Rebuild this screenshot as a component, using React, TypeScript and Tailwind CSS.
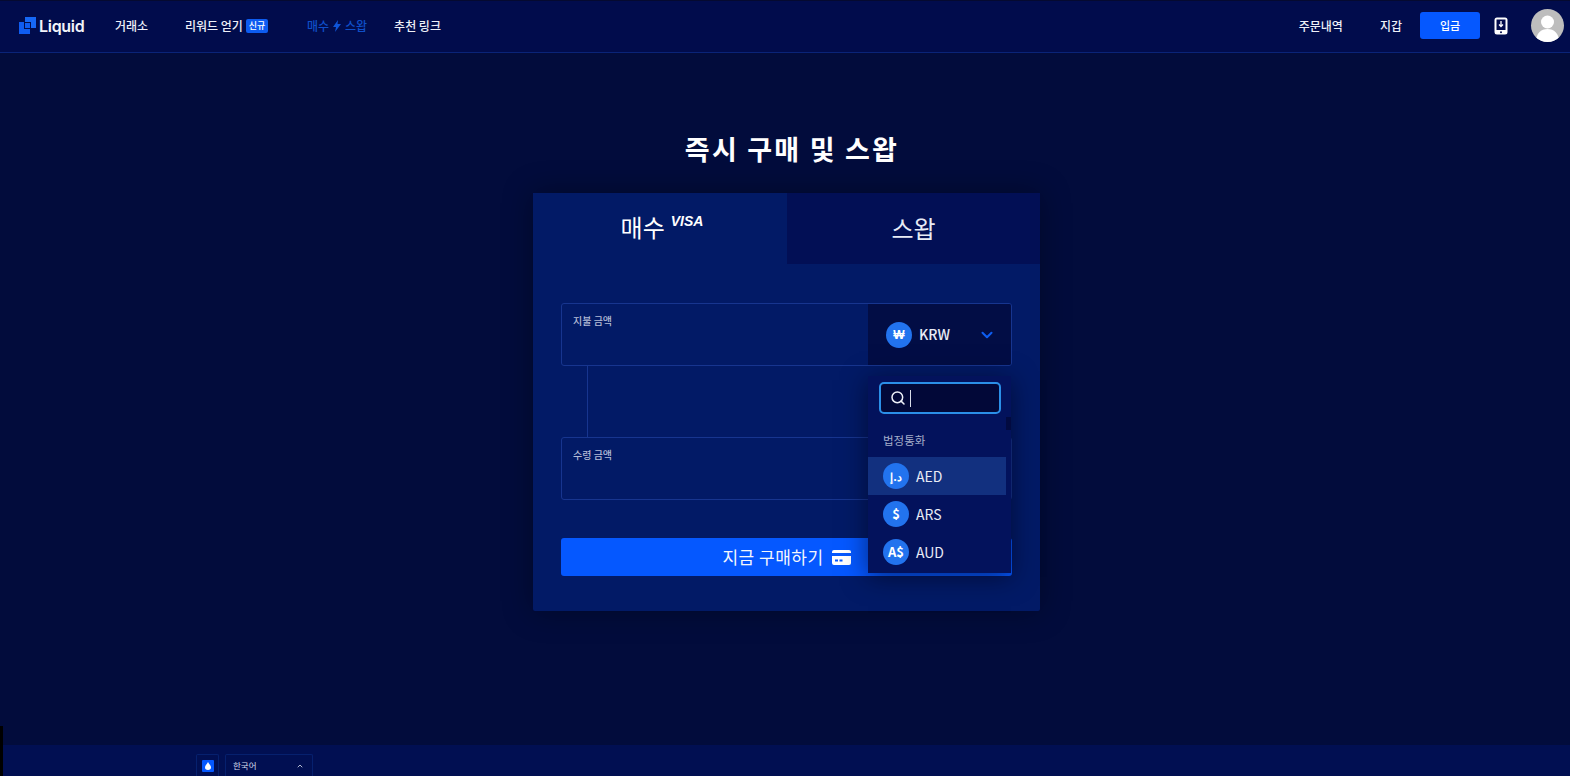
import React from "react";
import { ChevronDown, ChevronUp, Search } from "lucide-react";

const font = { fontFamily: '"Noto Sans CJK KR", "Noto Sans", sans-serif' };

function Coin({ children, small }: { children: React.ReactNode; small?: boolean }) {
  return (
    <div className={`w-[26px] h-[26px] rounded-full bg-[#2273ee] flex items-center justify-center text-white font-bold shrink-0 ${small ? "text-[11px]" : "text-[13px]"}`}>
      {children}
    </div>
  );
}

function Row({ code, sym, active, small }: { code: string; sym: string; active?: boolean; small?: boolean }) {
  return (
    <div className={`h-[38px] w-[138px] pl-[15px] flex items-center gap-[7px] ${active ? "bg-[#12307f]" : ""}`}>
      <Coin small={small}>{sym}</Coin>
      <span className="text-[14px] text-[#e8ebf5]">{code}</span>
    </div>
  );
}

function Field({ label, children }: { label: string; children?: React.ReactNode }) {
  return (
    <div className="h-[63px] border border-[#17358f] rounded-[3px] flex justify-between overflow-hidden">
      <div className="pl-[11px] pt-[10px] text-[10px] leading-[14px] font-medium text-[#b4bcd6]">{label}</div>
      {children}
    </div>
  );
}

export default function App() {
  return (
    <div style={font} className="w-[1570px] h-[776px] bg-[#020c3c] flex flex-col overflow-hidden text-white relative">
      <header className="h-[53px] shrink-0 bg-[#010c4c] border-b border-[#0a2478] border-t border-t-[#050a30] flex items-center pl-[19px] pr-[6px] pb-[2px]">
        <svg width="17" height="17" viewBox="0 0 17 17" className="mr-[3px]">
          <path d="M6 0H17V11H12V5H6z" fill="#1668f5" />
          <path d="M0 5H5V12H11V17H0z" fill="#0f5cf0" />
          <path d="M6 6H11V11H6z" fill="#0f5cf0" />
        </svg>
        <span className="text-[16px] font-semibold tracking-[-0.3px] w-[76px] text-[#f2f4fa]" style={{ fontFamily: '"Inter", sans-serif' }}>Liquid</span>
        <span className="text-[12px] font-medium w-[70px] text-[#eef0f8]">거래소</span>
        <span className="text-[12px] font-medium text-[#eef0f8] mr-[3px]">리워드 얻기</span>
        <span className="h-[14px] w-[22px] rounded-[2px] bg-[#0d5cf0] text-[9px] font-medium flex items-center justify-center mr-[39px]">신규</span>
        <span className="text-[12px] font-medium text-[#0f4fc8] flex items-center gap-[4px] mr-[27px]">
          매수
          <svg width="8" height="12" viewBox="0 0 8 12"><path d="M5 0 0 7h3l-1 5 6-8H4.500z" fill="#0f55d8" /></svg>
          스왑
        </span>
        <span className="text-[12px] font-medium text-[#eef0f8]">추천 링크</span>
        <div className="flex-1" />
        <span className="text-[12px] font-medium text-[#eef0f8] mr-[37px]">주문내역</span>
        <span className="text-[12px] font-medium text-[#eef0f8] mr-[18px]">지갑</span>
        <button className="w-[60px] h-[27px] rounded-[3px] bg-[#0558ff] text-[11px] font-medium flex items-center justify-center mr-[14px]">입금</button>
        <svg width="14" height="18" viewBox="0 0 14 18" className="mr-[23px]">
          <rect x="0.500" y="0.500" width="13" height="17" rx="2.500" fill="#fff" />
          <rect x="2.500" y="2.500" width="9" height="10.500" fill="#020b4c" />
          <path d="M7 4v5M5 7.500 7 9.500l2-2" stroke="#fff" strokeWidth="1.300" fill="none" />
          <circle cx="7" cy="15.200" r="1" fill="#020b4c" />
        </svg>
        <div className="w-[33px] h-[33px] rounded-full bg-[#bdbdbd] overflow-hidden">
          <svg width="33" height="33" viewBox="0 0 33 33">
            <circle cx="16.500" cy="13" r="6.500" fill="#fff" />
            <path d="M5 33c0-9 5-13 11.500-13S28 24 28 33z" fill="#fff" />
          </svg>
        </div>
      </header>

      <main className="flex-1 flex flex-col items-center pl-[3px]">
        <h1 className="mt-[76px] h-[40px] leading-[40px] text-[27px] font-bold tracking-[2.200px] pl-[11px] text-center text-white">즉시 구매 및 스왑</h1>
        <div className="mt-[24px] w-[507px] h-[418px] bg-[#021a66] rounded-[2px] shadow-[0_0_30px_rgba(0,0,0,0.35)] relative">
          <div className="flex h-[71px]">
            <div className="w-[254px] flex items-center justify-center gap-[6px] bg-[#021a66] pb-[3px] pl-[4px]">
              <span className="text-[24px]">매수</span>
              <span className="italic font-bold text-[14px] -mt-[11px]" style={{ fontFamily: '"Liberation Sans", sans-serif' }}>VISA</span>
            </div>
            <div className="flex-1 flex items-center justify-center bg-[#020f55] text-[24px] text-[#e8ebf5] pb-[1px]">스왑</div>
          </div>
          <div className="px-[28px] pt-[39px]">
            <Field label="지불 금액">
              <div className="w-[143px] bg-[#020d45] flex items-center pl-[18px] pr-[15px]">
                <Coin><span className="font-['Liberation_Sans'] text-[12px]">₩</span></Coin>
                <span className="ml-[7px] text-[14px] font-medium text-[#e8ebf5]">KRW</span>
                <div className="flex-1" />
                <ChevronDown size={18} strokeWidth={2.750} className="text-[#0d5cf0]" />
              </div>
            </Field>
            <div className="h-[71px] ml-[26px] border-l border-[#17358f]" />
            <Field label="수령 금액" />
            <button className="mt-[38px] w-full h-[38px] rounded-[3px] bg-[#0558ff] flex items-center justify-center gap-[8px] text-[17px] tracking-[0.5px] text-[#f4f6fc]">
              지금 구매하기
              <svg width="19" height="15" viewBox="0 0 19 15">
                <path d="M0 2a2 2 0 0 1 2-2h15a2 2 0 0 1 2 2v1H0zM0 6h19v7a2 2 0 0 1-2 2H2a2 2 0 0 1-2-2z" fill="#fff" />
                <rect x="3" y="9.500" width="3" height="2" fill="#0558ff" />
                <rect x="7.500" y="9.500" width="3" height="2" fill="#0558ff" />
              </svg>
            </button>
          </div>

          <div className="absolute left-[335px] top-[183px] w-[143px] h-[197px] bg-[#03125c] shadow-[0_4px_24px_rgba(0,0,20,0.55)]">
            <div className="mx-[11px] mt-[6px] h-[32px] w-[122px] rounded-[5px] border-2 border-[#2b8fe8] bg-[#020838] flex items-center pl-[9px]">
              <Search size={16} strokeWidth={2.250} className="text-[#eef0f8]" />
              <span className="ml-[4px] w-px h-[17px] bg-[#d8dce8]" />
            </div>
            <div className="absolute right-0 top-[41px] w-[5px] h-[13px] bg-[#020a40]" />
            <div className="ml-[15px] mt-[16px] h-[20px] text-[11.500px] leading-[20px] text-[#a5aeca]">법정통화</div>
            <div className="mt-[7px]">
              <Row code="AED" sym="د.إ" active small />
              <Row code="ARS" sym="$" />
              <Row code="AUD" sym="A$" />
            </div>
          </div>
        </div>
      </main>

      <footer className="h-[31px] shrink-0 bg-[#010f52] flex items-end pl-[196px]">
        <div className="w-[23px] h-[22px] border border-[#06206e] border-b-0 rounded-t-[2px] flex items-center justify-center mr-[6px]">
          <div className="w-[12px] h-[12px] rounded-[1px] bg-[#0558ff] flex items-center justify-center">
            <svg width="6" height="8" viewBox="0 0 6 8"><path d="M3 0C4 2 6 3.500 6 5.300A3 2.700 0 0 1 0 5.300C0 3.500 2 2 3 0z" fill="#fff" /></svg>
          </div>
        </div>
        <div className="w-[88px] h-[22px] border border-[#06206e] border-b-0 rounded-t-[2px] flex items-center justify-between pl-[7px] pr-[8px] text-[8.500px] text-[#d6dbea]">
          한국어
          <ChevronUp size={8} strokeWidth={2.500} />
        </div>
      </footer>
      <div className="absolute left-0 top-[726px] w-[3px] h-[50px] bg-black" />
    </div>
  );
}
